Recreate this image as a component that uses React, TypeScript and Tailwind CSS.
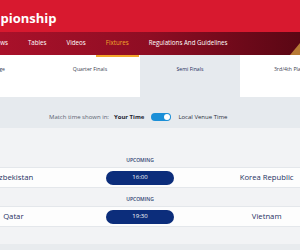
import React from "react";

const navItems = ["News", "Tables", "Videos", "Fixtures", "Regulations And Guidelines"];
const stages = ["Group Stage", "Quarter Finals", "Semi Finals", "3rd/4th Place"];

const matches = [
  { home: "Uzbekistan", away: "Korea Republic", time: "16:00" },
  { home: "Qatar", away: "Vietnam", time: "19:30" },
];

export default function App() {
  return (
    <div className="w-[300px] h-[250px] overflow-hidden bg-[#f2f3f5] font-['Open_Sans',sans-serif]">
      {/* title bar */}
      <div className="h-[32px] bg-[#d8192f] flex items-center pt-[5px]">
        <span className="ml-[-37px] whitespace-nowrap text-[13px] font-bold text-white">Championship</span>
      </div>

      {/* nav */}
      <div className="relative h-[23px] bg-gradient-to-r from-[#a9112a] via-[#8e0d23] to-[#5a0714] flex">
        <div className="ml-[-18px] flex h-full">
          {navItems.map((n) => (
            <div key={n} className="relative h-full flex items-center pb-[1px] px-[10px] whitespace-nowrap">
              <span className={"text-[6.2px] font-medium " + (n === "Fixtures" ? "text-[#f4a62a]" : "text-white")}>{n}</span>
              {n === "Fixtures" && (
                <div className="absolute left-0 right-0 bottom-[-2px] h-[2px] bg-[#f4a62a]" />
              )}
            </div>
          ))}
        </div>
        <div className="absolute right-0 bottom-0 w-0 h-0 border-l-[10px] border-l-transparent border-b-[12px] border-b-[#b77a35]" />
      </div>

      {/* stage tabs */}
      <div className="h-[42px] bg-white flex ml-[-60px] w-[400px]">
        {stages.map((s) => (
          <div
            key={s}
            className={
              "w-[100px] pt-[11px] text-center text-[5.2px] whitespace-nowrap " +
              (s === "Semi Finals" ? "bg-[#e6eaee] text-[#1d2c5a]" : "text-[#3a4252]")
            }
          >
            {s}
          </div>
        ))}
      </div>

      {/* time toggle */}
      <div className="h-[31px] bg-[#e6eaee] flex items-center pt-[9px] pl-[49px] text-[6px] whitespace-nowrap">
        <span className="text-[#5b6270]">Match time shown in:</span>
        <span className="ml-[5px] font-bold text-[#1f2533]">Your Time</span>
        <div className="ml-[7px] w-[20px] h-[8px] rounded-full bg-[#1b8fd7] flex items-center justify-end pr-[1px]">
          <div className="w-[6px] h-[6px] rounded-full bg-white" />
        </div>
        <span className="ml-[7px] text-[#2a3040]">Local Venue Time</span>
      </div>

      {/* fixtures */}
      <div className="pt-[29px] flex flex-col">
        {matches.map((m, i) => (
          <div key={m.time} className={i > 0 ? "mt-[8px]" : ""}>
            <div className="ml-[-50px] w-[380px] grid grid-cols-3 h-[8px] items-center">
              <div />
              <div className="text-center text-[5px] font-semibold text-[#2d3f70] uppercase">Upcoming</div>
              <div />
            </div>
            <div className="mt-[2px] h-[21px] bg-[#fdfdfd] border-y border-[#e4e7eb]">
              <div className="ml-[-50px] w-[380px] h-full grid grid-cols-3 items-center">
                <div className="text-center text-[7.7px] font-medium text-[#1f3163] whitespace-nowrap">{m.home}</div>
                <div className="flex justify-center">
                  <div className="w-[68px] h-[14px] rounded-full bg-[#0c2d7b] flex items-center justify-center text-[6px] text-white">
                    {m.time}
                  </div>
                </div>
                <div className="text-center text-[7.7px] font-medium text-[#1f3163] whitespace-nowrap">{m.away}</div>
              </div>
            </div>
          </div>
        ))}
      </div>
      <div className="mt-[17px] h-[10px] bg-[#e8ebee]" />
    </div>
  );
}
